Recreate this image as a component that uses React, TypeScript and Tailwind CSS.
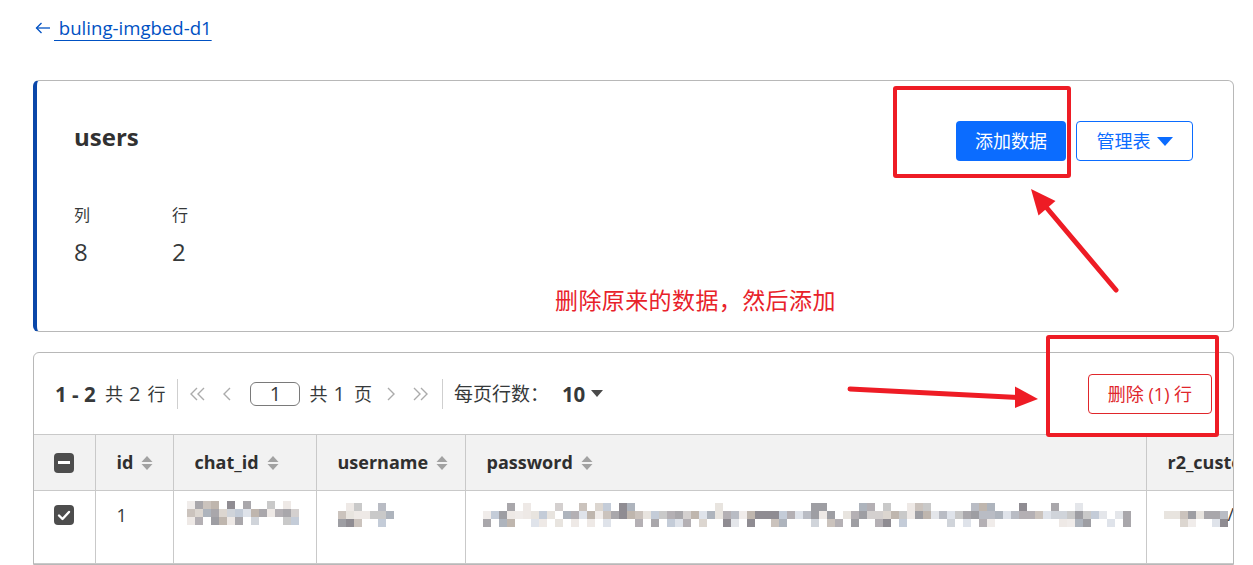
import React from "react";

const PALETTE = [
  "#c9c9c9", "#d4d0cf", "#b9bcc4", "#e4e6ea", "#a9a7ab", "#dcd6d0", "#c4ccd8",
  "#eee9e6", "#9e9ea3", "#cbc3bd", "#f0ecea", "#b4b0b4", "#e8e4df", "#d0d4da",
  "#8f8c92", "#bfb6ae", "#dfe3ea", "#aeb4bd",
];

function makeRand(seed: number) {
  let s = seed;
  return () => {
    s = (s * 9301 + 49297) % 233280;
    return s / 233280;
  };
}

function Mosaic({ cols, seed, probs = [0.45, 0.95, 0.35] }: { cols: number; seed: number; probs?: number[] }) {
  const r = makeRand(seed);
  const rows = probs.map((p, ri) =>
    Array.from({ length: cols }, (_, ci) => {
      const on = r() < p;
      const c = PALETTE[Math.floor(r() * PALETTE.length)];
      return { on, c, key: `${ri}-${ci}` };
    })
  );
  return (
    <div className="flex flex-col">
      {rows.map((row, ri) => (
        <div key={ri} className="flex h-[8px]">
          {row.map((cell) => (
            <div
              key={cell.key}
              className="w-[8px] h-[8px]"
              style={{ backgroundColor: cell.on ? cell.c : "transparent" }}
            />
          ))}
        </div>
      ))}
    </div>
  );
}

function SortIcon() {
  return (
    <svg width="12" height="14" viewBox="0 0 12 14" className="shrink-0">
      <polygon points="6,0 11.5,6 0.5,6" fill="#a2a2a2" />
      <polygon points="0.5,8 11.5,8 6,14" fill="#a2a2a2" />
    </svg>
  );
}

function HeadCell({ label, width }: { label: string; width: number }) {
  return (
    <th
      className="h-[56px] border-r border-[#c9c9c9] text-left font-bold text-[18px] text-[#2f2f2f] align-middle"
      style={{ width }}
    >
      <div className="flex items-center gap-[8px] pl-[21px] whitespace-nowrap">
        <span>{label}</span>
        <SortIcon />
      </div>
    </th>
  );
}

function DblLeft() {
  return (
    <svg width="18" height="16" viewBox="0 0 18 16" fill="none" stroke="#ababab" strokeWidth="1.4">
      <path d="M8 2 L2 8 L8 14" />
      <path d="M15 2 L9 8 L15 14" />
    </svg>
  );
}
function SglLeft() {
  return (
    <svg width="10" height="16" viewBox="0 0 10 16" fill="none" stroke="#ababab" strokeWidth="1.4">
      <path d="M8 2 L2 8 L8 14" />
    </svg>
  );
}
function SglRight() {
  return (
    <svg width="10" height="16" viewBox="0 0 10 16" fill="none" stroke="#ababab" strokeWidth="1.4">
      <path d="M2 2 L8 8 L2 14" />
    </svg>
  );
}
function DblRight() {
  return (
    <svg width="18" height="16" viewBox="0 0 18 16" fill="none" stroke="#ababab" strokeWidth="1.4">
      <path d="M3 2 L9 8 L3 14" />
      <path d="M10 2 L16 8 L10 14" />
    </svg>
  );
}

export default function App() {
  return (
    <div className="relative w-[1253px] h-[565px] overflow-hidden bg-white text-[#36393a] font-['Open_Sans','Noto_Sans_CJK_SC',sans-serif]">
      {/* back link */}
      <div className="h-[80px] pt-[15px] pl-[35px]">
        <a className="flex items-center text-[18.6px] leading-[26px] text-[#0051c3]">
          <svg width="16" height="12" viewBox="0 0 16 12" fill="none" stroke="#0051c3" strokeWidth="1.3" className="mr-[3px]">
            <path d="M15 6 H1.5" />
            <path d="M6.5 1 L1.5 6 L6.5 11" />
          </svg>
          <span className="underline underline-offset-[5px] decoration-1 whitespace-pre">{" buling-imgbed-d1"}</span>
        </a>
      </div>

      {/* card 1 */}
      <div className="ml-[33px] w-[1201px] h-[252px] border border-[#b8b8b8] border-l-4 border-l-[#0a47a9] rounded-[6px] flex justify-between pt-[40px] pl-[37px] pr-[40px]">
        <div className="flex flex-col">
          <div className="text-[24px] leading-[32px] font-bold text-[#313131]">users</div>
          <div className="flex mt-[50px]">
            <div className="w-[98px] flex flex-col">
              <span className="text-[16px] leading-[24px]">列</span>
              <span className="text-[24px] leading-[32px] mt-[9px]">8</span>
            </div>
            <div className="flex flex-col">
              <span className="text-[16px] leading-[24px]">行</span>
              <span className="text-[24px] leading-[32px] mt-[9px]">2</span>
            </div>
          </div>
        </div>
        <div className="flex gap-[10px] items-start">
          <button className="w-[110px] h-[40px] rounded-[4px] bg-[#0b6cff] text-white text-[18px] flex items-center justify-center">
            添加数据
          </button>
          <button className="w-[117px] h-[40px] rounded-[4px] border border-[#0b6cff] text-[#0b6cff] text-[18px] flex items-center justify-center gap-[6px]">
            管理表
            <svg width="16" height="9" viewBox="0 0 16 9">
              <polygon points="0,0 16,0 8,9" fill="#0b6cff" />
            </svg>
          </button>
        </div>
      </div>

      {/* card 2 */}
      <div className="ml-[33px] mt-[20px] w-[1201px] border border-[#b8b8b8] rounded-t-[6px] overflow-hidden">
        <div className="h-[81px] flex items-center justify-between pl-[21px] pr-[21px] text-[18px] leading-[26px]">
          <div className="flex items-center">
            <span className="w-[44px] text-[20.5px] font-bold whitespace-pre">1 - 2</span>
            <span className="ml-[6px]">共</span>
            <span className="ml-[6px] text-[20px]">2</span>
            <span className="ml-[7px]">行</span>
            <div className="w-px h-[30px] bg-[#cfcfcf] ml-[12px]" />
            <div className="ml-[11px]"><DblLeft /></div>
            <div className="ml-[15px]"><SglLeft /></div>
            <div className="ml-[18px] w-[50px] h-[24px] border border-[#7a7a7a] rounded-[6px] flex items-center justify-center text-[20px] leading-none">1</div>
            <span className="ml-[9px]">共</span>
            <span className="ml-[6px] text-[20px]">1</span>
            <span className="ml-[9px]">页</span>
            <div className="ml-[14px]"><SglRight /></div>
            <div className="ml-[15px]"><DblRight /></div>
            <div className="w-px h-[30px] bg-[#cfcfcf] ml-[13px]" />
            <span className="ml-[11px] text-[19px]">每页行数：</span>
            <span className="ml-[13px] text-[20.5px] font-bold">10</span>
            <svg width="12" height="7" viewBox="0 0 12 7" className="ml-[6px]">
              <polygon points="0,0 12,0 6,7" fill="#4a4a4a" />
            </svg>
          </div>
          <button className="w-[124px] h-[40px] rounded-[4px] border border-[#e0262b] text-[#e0262b] text-[18px] flex items-center justify-center">
            删除 (1) 行
          </button>
        </div>
        <table className="table-fixed border-collapse w-[1500px]">
          <thead>
            <tr className="bg-[#f2f2f2] border-t border-b border-[#c9c9c9]">
              <th className="w-[61px] h-[56px] border-r border-[#c9c9c9]">
                <div className="flex justify-center">
                  <div className="w-[20px] h-[20px] rounded-[4px] bg-[#4d4d4d] flex items-center justify-center">
                    <div className="w-[12px] h-[3px] bg-white" />
                  </div>
                </div>
              </th>
              <HeadCell label="id" width={78} />
              <HeadCell label="chat_id" width={143} />
              <HeadCell label="username" width={149} />
              <HeadCell label="password" width={681} />
              <HeadCell label="r2_custom_url" width={388} />
            </tr>
          </thead>
          <tbody>
            <tr className="h-[73px] border-b border-[#c9c9c9] align-top">
              <td className="border-r border-[#c9c9c9]">
                <div className="flex justify-center pt-[14px]">
                  <div className="w-[20px] h-[20px] rounded-[4px] bg-[#4d4d4d] flex items-center justify-center">
                    <svg width="14" height="11" viewBox="0 0 14 11" fill="none" stroke="white" strokeWidth="2.4" strokeLinecap="round" strokeLinejoin="round">
                      <path d="M2 5.5 L5.5 9 L12 2" />
                    </svg>
                  </div>
                </div>
              </td>
              <td className="border-r border-[#c9c9c9] pl-[21px] pt-[11px] text-[18px] leading-[26px]">1</td>
              <td className="border-r border-[#c9c9c9] pl-[13px] pt-[10px]">
                <Mosaic cols={14} seed={7} probs={[0.55, 0.95, 0.7]} />
              </td>
              <td className="border-r border-[#c9c9c9] pl-[21px] pt-[12px]">
                <Mosaic cols={7} seed={31} probs={[0.3, 0.95, 0.7]} />
              </td>
              <td className="border-r border-[#c9c9c9] pl-[17px] pt-[12px]">
                <Mosaic cols={81} seed={113} probs={[0.3, 0.97, 0.55]} />
              </td>
              <td className="border-r border-[#c9c9c9] pl-[17px] pt-[12px]">
                <div className="flex items-start">
                  <Mosaic cols={8} seed={59} probs={[0.1, 0.95, 0.6]} />
                  <span className="text-[18px] leading-[18px] mt-[2px]">/gh</span>
                </div>
              </td>
            </tr>
          </tbody>
        </table>
      </div>

      {/* annotation overlay */}
      <svg className="absolute left-0 top-0 pointer-events-none" width="1253" height="565" viewBox="0 0 1253 565">
        <rect x="895" y="88" width="174" height="88" fill="none" stroke="#ee1c25" strokeWidth="4" rx="1" />
        <rect x="1048" y="337" width="169" height="98" fill="none" stroke="#ee1c25" strokeWidth="4" rx="1" />
        <line x1="1116" y1="290" x2="1046" y2="207" stroke="#ee1c25" strokeWidth="5" strokeLinecap="round" />
        <polygon points="1031,189 1055.5,201 1038.5,215.5" fill="#ee1c25" />
        <line x1="850" y1="389" x2="1020" y2="397.5" stroke="#ee1c25" strokeWidth="5" strokeLinecap="round" />
        <polygon points="1038,399 1015,386.5 1015,408" fill="#ee1c25" />
      </svg>
      <div className="absolute left-[555px] top-[285px] text-[23px] leading-[28px] tracking-[0.4px] text-[#e8222a] whitespace-nowrap font-['Noto_Sans_CJK_SC',sans-serif]">
        删除原来的数据，然后添加
      </div>
    </div>
  );
}
